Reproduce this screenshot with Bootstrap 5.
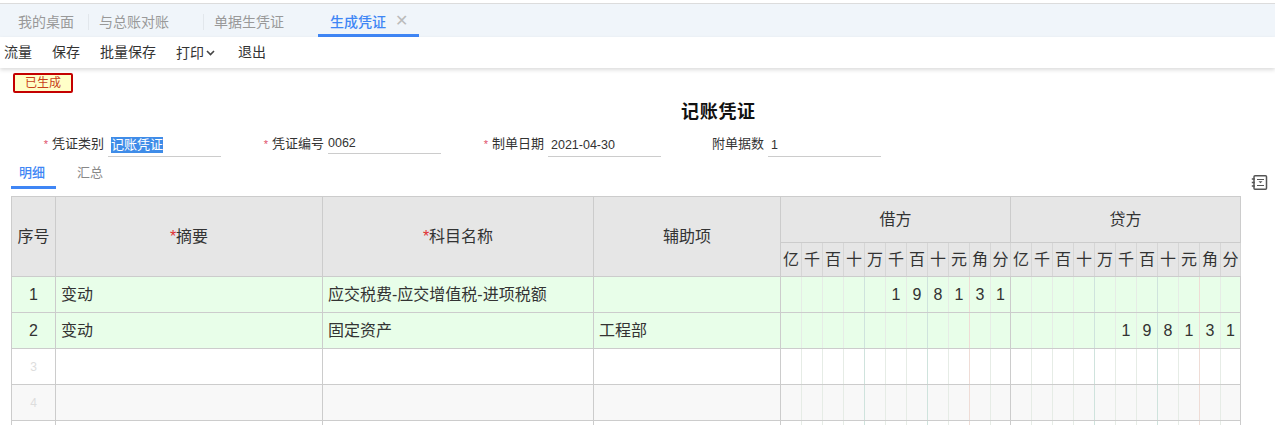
<!DOCTYPE html>
<html lang="zh">
<head>
<meta charset="utf-8">
<title>生成凭证</title>
<link rel="stylesheet" href="https://cdn.jsdelivr.net/npm/bootstrap@5.3.0/dist/css/bootstrap.min.css">
<style>
html,body{height:425px;overflow:hidden;background:#fff}
body{font-family:"Liberation Sans","Noto Sans CJK SC",sans-serif;font-size:14px;color:#333}
.topstrip{height:4px;background:#fff;border-bottom:1px solid #dcdcdc}
.tabbar{height:33px;background:#f0f5fa;padding-left:18px}
.tabitem{color:#999;line-height:36px;height:33px}
.tabsep{width:1px;height:16px;background:#e2e7ec;margin-top:10px}
.sepone{margin-left:14px;margin-right:10px}
.septwo{margin-left:34px;margin-right:10px}
.tabactive{color:#3f86f5;font-weight:500;width:101px;margin-left:34px;padding-left:12px;border-bottom:3px solid #3f86f5;line-height:36px;height:33px}
.tabclose{color:#bbb;font-size:16px;margin-left:9px;line-height:34px}
.toolbar{height:31px;background:#fff;box-shadow:0 2px 4px rgba(0,0,0,.14);padding-left:4px;gap:20px;line-height:30px;color:#333;position:relative}
.chev{margin-left:2px;vertical-align:2px}
.exitgap{margin-left:3px}
.statusbox{width:60px;height:20px;margin:5px 0 0 13px;border:2px solid #c40000;border-radius:2px;background:#ffffc8;color:#c8401a;font-size:12px;line-height:16px;text-align:center}
.titletext{font-size:18px;font-weight:700;color:#111;line-height:24px;margin:7px 0 0 681px;letter-spacing:.7px}
.formline{margin-top:9px;height:30px}
.fieldbox{width:220px;flex:none}
.fieldlabel{width:104px;text-align:right;font-size:13px;line-height:22px;margin-right:4px;color:#333;flex:none}
.reqmark{color:#e0506a;margin-right:4px;font-size:11px}
.fieldval{width:113px;height:24px;border-bottom:1px solid #ccc;font-size:12.5px;line-height:24px;padding-left:3px;color:#333;flex:none}
.fieldshort{height:21px;line-height:20px;padding-left:0}
.selected{background:#3f8ce8;color:#fff;font-size:13px;display:inline-block;line-height:16px}
.subbar{height:33px;margin-top:-6px;padding-top:6px;position:relative;box-sizing:content-box}
.subtab{font-size:13px;line-height:20px;height:26px}
.subactive{width:45px;margin-left:11px;padding-left:8px;color:#3f86f5;font-weight:500;border-bottom:3px solid #3f86f5}
.subplain{color:#888;margin-left:21px}
.sideicon{position:absolute;left:1251px;top:17px}
.gridwrap{padding-left:11px;width:1241px}
.ledger{table-layout:fixed;width:1230px;margin:0;border-collapse:collapse;font-size:16px;color:#333}
.ledger>:not(caption)>*>*{padding:0;border:1px solid #ccc;vertical-align:middle;box-shadow:none;background:transparent;color:inherit}
.ledger thead th{background:#e6e6e6;font-weight:400;text-align:center}
.ledger .rowa{height:46px}
.ledger .rowb{height:34px}
.ledger tbody tr{height:36px}
.ledger tbody tr.greenrow>*{background:#e8fee9}
.ledger tbody tr.whiterow>*{background:#fff}
.ledger tbody tr.greyrow>*{background:#f8f8f8}
.ledger .star{color:#e03030}
.ledger .txt{padding-left:5px}
.ledger .seq{text-align:center}
.ledger .seqfade{text-align:center;color:#ddd;font-size:12px}
.ledger td.dg,.ledger th.dg{text-align:center;border-left-color:#e6ece6;border-right-color:#e6ece6}
.ledger th.dg{border-left-color:#d6d6d6;border-right-color:#d6d6d6}
.ledger td.sepb{border-right-color:#cfe3dd}
.ledger td.sepr{border-right-color:#efdcd6}
.ledger td.edgeb{border-right-color:#ccc}
</style>
</head>
<body>
<div class="topstrip"></div>
<div class="tabbar d-flex">
  <div class="tabitem">我的桌面</div>
  <div class="tabsep sepone"></div>
  <div class="tabitem">与总账对账</div>
  <div class="tabsep septwo"></div>
  <div class="tabitem">单据生凭证</div>
  <div class="tabactive d-flex"><span>生成凭证</span><span class="tabclose">✕</span></div>
</div>
<div class="toolbar d-flex">
  <span>流量</span><span>保存</span><span>批量保存</span>
  <span class="d-flex align-items-center">打印<svg class="chev" width="9" height="6" viewBox="0 0 9 6"><path d="M1 1l3.5 3.5L8 1" fill="none" stroke="#444" stroke-width="1.6"/></svg></span>
  <span class="exitgap">退出</span>
</div>
<div class="statusbox">已生成</div>
<div class="titletext">记账凭证</div>
<div class="formline d-flex">
  <div class="fieldbox d-flex"><div class="fieldlabel"><span class="reqmark">*</span>凭证类别</div><div class="fieldval"><span class="selected">记账凭证</span></div></div>
  <div class="fieldbox d-flex"><div class="fieldlabel"><span class="reqmark">*</span>凭证编号</div><div class="fieldval fieldshort">0062</div></div>
  <div class="fieldbox d-flex"><div class="fieldlabel"><span class="reqmark">*</span>制单日期</div><div class="fieldval">2021-04-30</div></div>
  <div class="fieldbox d-flex"><div class="fieldlabel">附单据数</div><div class="fieldval">1</div></div>
</div>
<div class="subbar d-flex">
  <div class="subtab subactive">明细</div>
  <div class="subtab subplain">汇总</div>
  <svg class="sideicon" width="17" height="17" viewBox="0 0 17 17"><g fill="none" stroke="#555" stroke-width="1.5"><rect x="3" y="1.8" width="12.5" height="13.5" rx="1"/><path d="M0.8 5h3M0.8 8.5h3M0.8 12h3"/></g><path d="M6 5h7v1.1H6zM6 11h7v1.1H6zM7.5 7.2h4l-2 2z" fill="#555"/></svg>
</div>
<div class="gridwrap" id="grid"></div>
<script>
var cols='<col style="width:44px"><col style="width:267px"><col style="width:271px"><col style="width:187px">';
var labels=['亿','千','百','十','万','千','百','十','元','角','分'];
var i;
var widths=[21,21,21,21,21,21,21,21,21,21,20];
for(var s=0;s<2;s++){for(i=0;i<11;i++){cols+='<col style="width:'+widths[i]+'px">';}}
function sepClass(i){
  if(i===3||i===6)return ' sepb';
  if(i===8)return ' sepr';
  if(i===10)return ' edgeb';
  return '';
}
var headDigits='';
for(var s2=0;s2<2;s2++){for(i=0;i<11;i++){headDigits+='<th class="dg'+(i===10?' edgeb':'')+'">'+labels[i]+'</th>';}}
function row(cls,seq,seqCls,a,b,c,debit,credit){
  var h='<tr class="'+cls+'"><td class="'+seqCls+'">'+seq+'</td><td class="txt">'+a+'</td><td class="txt">'+b+'</td><td class="txt">'+c+'</td>';
  var d=debit.padStart(11,' ')+credit.padStart(11,' ');
  for(var k=0;k<22;k++){var v=d.charAt(k).trim();h+='<td class="dg'+sepClass(k%11)+'">'+v+'</td>';}
  return h+'</tr>';
}
document.getElementById('grid').innerHTML='<table class="table table-bordered ledger"><colgroup>'+cols+'</colgroup><thead>'+
'<tr class="rowa"><th rowspan="2">序号</th><th rowspan="2"><span class="star">*</span>摘要</th><th rowspan="2"><span class="star">*</span>科目名称</th><th rowspan="2">辅助项</th><th colspan="11">借方</th><th colspan="11">贷方</th></tr>'+
'<tr class="rowb">'+headDigits+'</tr></thead><tbody>'+
row('greenrow','1','seq','变动','应交税费-应交增值税-进项税额','','198131','')+
row('greenrow','2','seq','变动','固定资产','工程部','','198131')+
row('whiterow','3','seqfade','','','','','')+
row('greyrow','4','seqfade','','','','','')+
row('whiterow','','seqfade','','','','','')+
'</tbody></table>';
</script>
<script src="https://cdn.jsdelivr.net/npm/bootstrap@5.3.0/dist/js/bootstrap.bundle.min.js"></script>
</body>
</html>
